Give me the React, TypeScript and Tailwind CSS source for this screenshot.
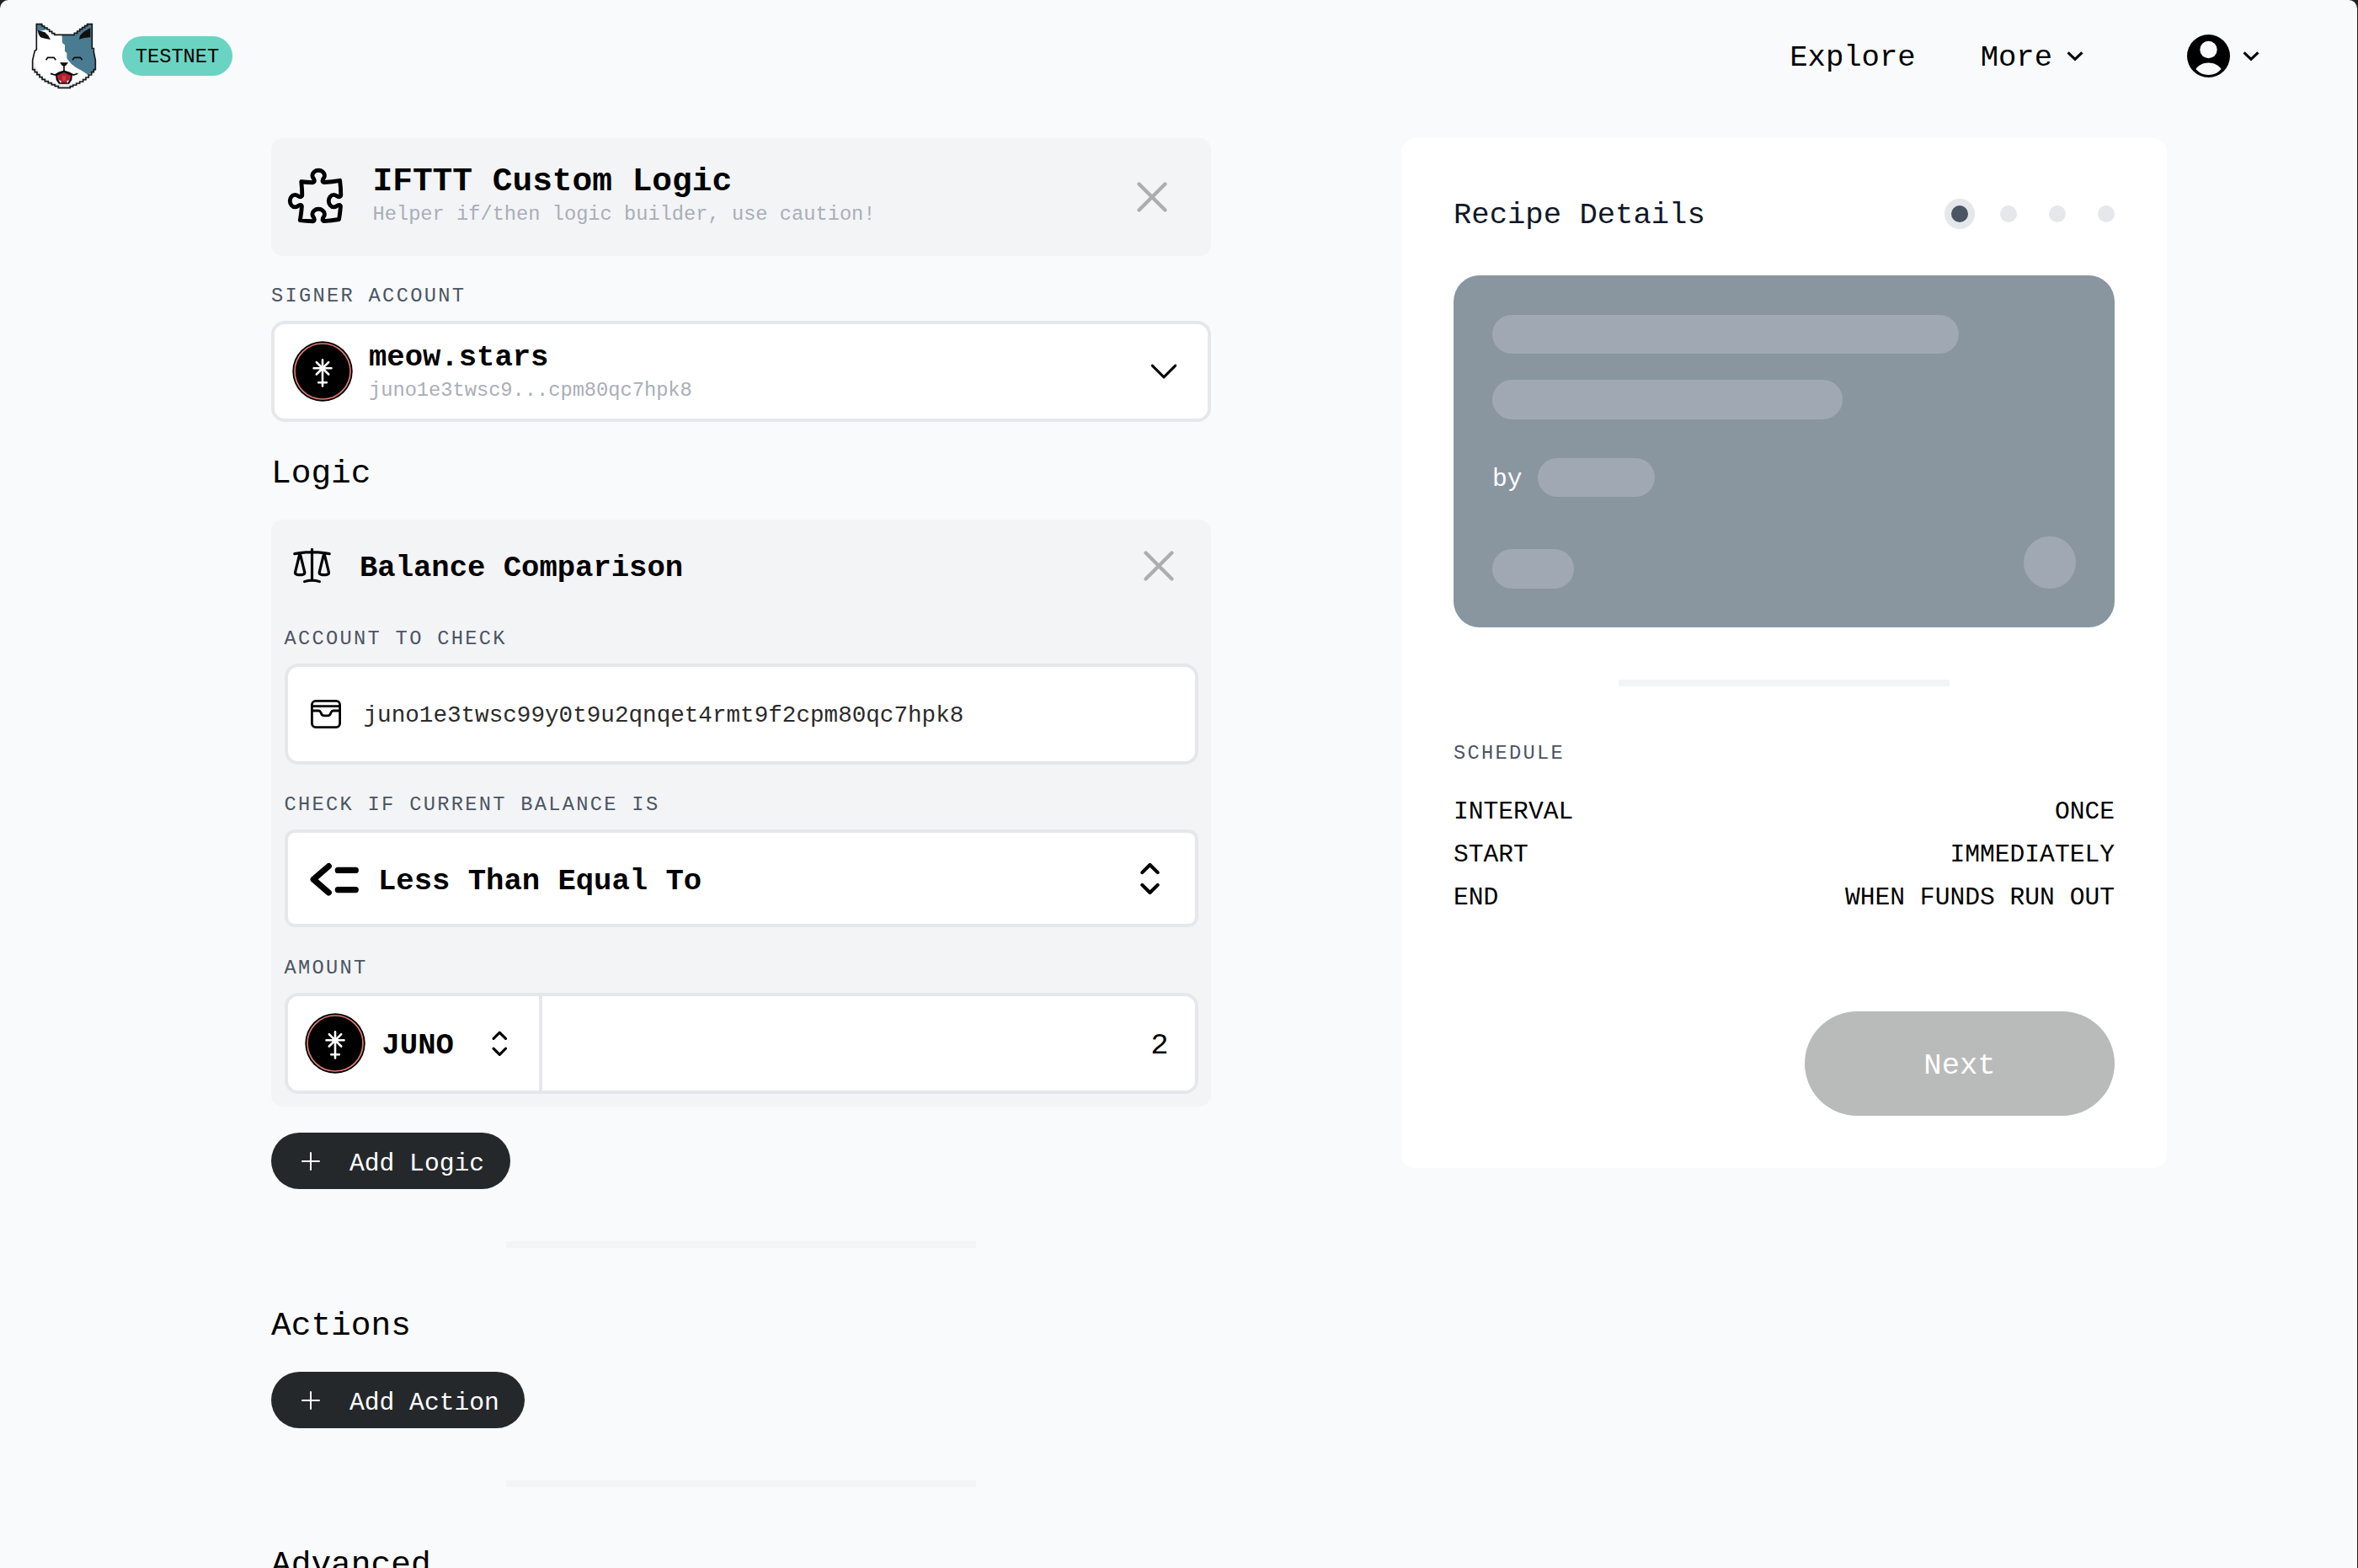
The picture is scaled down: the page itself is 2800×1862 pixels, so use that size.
import type { ReactNode } from "react";
import {
  HiOutlinePuzzlePiece,
  HiOutlineScale,
  HiOutlineXMark,
} from "react-icons/hi2";

function CatLogo() {
  return (
    <svg viewBox="111 78 234 237" className="h-[79px] w-[78px]" aria-hidden="true">
      <defs>
        <radialGradient id="fur" cx="0.5" cy="0.45" r="0.6">
          <stop offset="0.75" stopColor="#ffffff" />
          <stop offset="1" stopColor="#b9bcc0" />
        </radialGradient>
        <clipPath id="head">
          <path d="M130 83H149L167 98L195 122H265L285 102L310 83H328V170L335 182L340 212V245L325 262L300 282L270 298L250 310H208L185 298L150 280L135 265L116 245V212L124 178L130 174Z" />
        </clipPath>
      </defs>
      <g clipPath="url(#head)">
        <rect x="111" y="78" width="234" height="237" fill="url(#fur)" />
        <path d="M220 110H345V245L314 264L300 254L285 245L270 237L255 226L245 214L238 205V185L231 180V157L222 150Z" fill="#4a7c91" />
        <path d="M290 75H345V125H275Z" fill="#4a7c91" />
        <path d="M130 80H150L168 100L160 104L133 108Z" fill="#4a7c91" />
        <path d="M134 104L160 112L172 124L180 138L160 134L144 130L138 120Z" fill="#101010" />
        <path d="M322 96V130L300 132L281 137L286 122L298 110Z" fill="#101010" />
      </g>
      <path
        d="M130 83H149V90H158V96H168V102H176V109H185V116H194V121H265V115H275V108H284V101H293V95H302V89H311V83H328V170H334V182L340 212V245H334V254H326V264H316V273H306V281H296V288H284V294H272V300H260V305H250V310H208V304H196V299H184V293H172V287H160V280H150V272H141V263H132V254H124V245H116V212L124 178L130 174Z"
        fill="none"
        stroke="#15171a"
        strokeWidth="5"
      />
      <path d="M164 211L170 202H192L199 211M258 211L265 202H286L293 211" fill="none" stroke="#0b0b0b" strokeWidth="5" />
      <path d="M213 220H243L234 232H222Z" fill="#0b0b0b" />
      <path d="M228 230V248M180 259L196 264L210 256L228 250L246 256L262 264L277 259" fill="none" stroke="#0b0b0b" strokeWidth="5" />
      <path d="M198 262L228 250L258 262L256 282L246 296H210L200 282Z" fill="#0b0b0b" />
      <path d="M203 266L228 255L253 266L250 280L240 292H216L206 280Z" fill="#b3202f" />
      <path d="M222 268H234V284H222Z" fill="#cb3a4d" />
      <path d="M209 282L218 286L216 294ZM247 282L238 286L240 294Z" fill="#ffffff" />
    </svg>
  );
}

function JunoToken() {
  return (
    <svg viewBox="-36 -36 72 72" className="h-[72px] w-[72px] shrink-0" aria-hidden="true">
      <circle r="35.7" fill="#000" />
      <circle r="33" fill="none" stroke="#e07a70" strokeWidth="1.7" />
      <path
        d="M-10.5 -3.7H10.5M-7.2 -10.9L7.2 3.5M7.2 -10.9L-7.2 3.5M0 -13.8V17.4M-4.8 13.2H4.8"
        stroke="#fff"
        strokeWidth="2.6"
        strokeLinecap="round"
      />
      <circle cy="-3.7" r="3.4" fill="#fff" />
    </svg>
  );
}

function UserIcon() {
  return (
    <svg viewBox="0 0 50 50" className="h-[51px] w-[51px]" aria-hidden="true">
      <circle cx="25" cy="25" r="25" fill="#000" />
      <circle cx="25" cy="17.6" r="10" fill="#f9fafc" />
      <path d="M10.2 40.2C13.5 35.5 19 32.8 25 32.8C31 32.8 36.5 35.5 39.8 40.2C36 44.6 31 47 25 47C19 47 14 44.6 10.2 40.2Z" fill="#f9fafc" />
    </svg>
  );
}

function NavChevron({ className }: { className: string }) {
  return (
    <svg viewBox="0 0 20 12" className={className} fill="none" stroke="#000" strokeWidth="3.2" aria-hidden="true">
      <path d="M1.6 1.4L10 9.4L18.4 1.4" />
    </svg>
  );
}

function WalletIcon() {
  return (
    <svg viewBox="0 0 36 34" className="h-[34px] w-[36px] shrink-0" fill="none" stroke="#000" strokeWidth="2.8" strokeLinejoin="round" aria-hidden="true">
      <rect x="1.4" y="1.4" width="33.2" height="31.2" rx="4.5" />
      <path d="M1.4 7.6H34.6M1.4 13H9.5C11 13 11.4 13.8 12 15.2C12.8 17.6 14 18.9 15.8 18.9H20.2C22 18.9 23.2 17.6 24 15.2C24.6 13.8 25 13 26.5 13H34.6" />
    </svg>
  );
}

function LessThanEqualIcon() {
  return (
    <svg viewBox="0 0 58 40" className="mt-[2px] h-[40px] w-[58px] shrink-0" fill="none" stroke="#000" strokeWidth="7.2" strokeLinecap="round" strokeLinejoin="round" aria-hidden="true">
      <path d="M22.3 4.6L4.2 20.3L22.3 36M33.3 9.4H54.3M33.3 32.6H54.3" />
    </svg>
  );
}

function ChevronUpDown({ className, weight }: { className: string; weight: number }) {
  return (
    <svg viewBox="0 0 24 24" className={className} fill="none" stroke="#000" strokeWidth={weight} strokeLinecap="round" strokeLinejoin="round" aria-hidden="true">
      <path d="M8.25 15L12 18.75L15.75 15M8.25 9L12 5.25L15.75 9" />
    </svg>
  );
}

function FieldLabel({ children }: { children: ReactNode }) {
  return (
    <div className="mb-[14px] text-[23.7px] leading-[30px] tracking-[2.3px] text-[#4b5563] uppercase">
      {children}
    </div>
  );
}

function SectionTitle({ children }: { children: ReactNode }) {
  return <h2 className="text-[39.5px] leading-[56px]">{children}</h2>;
}

function AddButton({ children }: { children: ReactNode }) {
  return (
    <button className="flex h-[67px] items-center self-start rounded-full bg-[#25282b] pr-[30.5px] pl-[36px] text-[29.64px] text-white">
      <svg viewBox="0 0 22 22" className="mr-[35px] h-[22px] w-[22px]" stroke="#fff" strokeWidth="2" strokeLinecap="round" aria-hidden="true">
        <path d="M11 1V21M1 11H21" />
      </svg>
      <span className="pt-[6px] leading-[40px]">{children}</span>
    </button>
  );
}

function Divider() {
  return <div className="mt-[62px] h-[8px] w-1/2 self-center bg-[#f3f4f6]" />;
}

function ScheduleRow({ name, value }: { name: string; value: string }) {
  return (
    <div className="flex justify-between">
      <span>{name}</span>
      <span>{value}</span>
    </div>
  );
}

function Header() {
  return (
    <header className="flex h-[132px] items-center pr-[116px] pl-[37px]">
      <CatLogo />
      <span className="ml-[30px] flex h-[47px] w-[131px] items-center justify-center rounded-full bg-[#6bd3c1] text-[23.7px]">
        <span className="pt-[4px] leading-[30px]">TESTNET</span>
      </span>
      <nav className="ml-auto flex items-center text-[35.57px]">
        <span className="pt-[6px] leading-[44px]">Explore</span>
        <span className="ml-[77px] pt-[6px] leading-[44px]">More</span>
        <NavChevron className="mt-[2px] ml-[17px] h-[12px] w-[20px]" />
        <span className="ml-[123px]">
          <UserIcon />
        </span>
        <NavChevron className="mt-[2px] ml-[15px] h-[12px] w-[20px]" />
      </nav>
    </header>
  );
}

function RecipeBuilder() {
  return (
    <section className="flex w-[1116px] flex-col">
      <div className="flex h-[140px] items-start rounded-[14px] bg-[#f3f4f6] pt-[29px] pr-[39px] pl-[14.5px]">
        <HiOutlinePuzzlePiece className="mt-[2px] h-[77.5px] w-[77.5px]" />
        <div className="ml-[28.5px]">
          <h1 className="text-[39.5px] leading-[45px] font-bold">IFTTT Custom Logic</h1>
          <p className="pt-[2px] text-[23.7px] leading-[30px] text-[#a9aeb9]">
            Helper if/then logic builder, use caution!
          </p>
        </div>
        <HiOutlineXMark className="mt-[10px] ml-auto h-[62px] w-[62px] text-[#adadad] [stroke-width:1.65]" />
      </div>

      <div className="mt-[33px]">
        <FieldLabel>Signer account</FieldLabel>
      </div>
      <div className="flex h-[120px] items-center rounded-[16px] border-4 border-[#e5e7eb] bg-white pr-[30px] pl-[20.5px]">
        <JunoToken />
        <div className="ml-[19.5px] self-start pt-[19px]">
          <div className="text-[35.57px] leading-[42px] font-bold">meow.stars</div>
          <div className="text-[23.7px] leading-[35px] text-[#a9aeb9]">juno1e3twsc9...cpm80qc7hpk8</div>
        </div>
        <svg viewBox="0 0 24 24" className="ml-auto h-[44px] w-[44px]" fill="none" stroke="#000" strokeWidth="1.6" strokeLinecap="round" strokeLinejoin="round" aria-hidden="true">
          <path d="M19.5 8.25L12 15.75L4.5 8.25" />
        </svg>
      </div>

      <div className="mt-[34px] mb-[26px]">
        <SectionTitle>Logic</SectionTitle>
      </div>

      <div className="flex flex-col rounded-[14px] bg-[#f3f4f6] px-[15.5px] pb-[15px]">
        <div className="mb-[18px] flex h-[109px] items-center pr-[15.5px] pl-[7.5px]">
          <HiOutlineScale className="h-[51px] w-[51px]" />
          <h3 className="ml-[31px] pt-[6px] text-[35.57px] leading-[44px] font-bold">Balance Comparison</h3>
          <HiOutlineXMark className="ml-auto h-[62px] w-[62px] text-[#adadad] [stroke-width:1.65]" />
        </div>

        <FieldLabel>Account to check</FieldLabel>
        <div className="mb-[33px] flex h-[120px] items-center rounded-[16px] border-4 border-[#e5e7eb] bg-white pl-[27px]">
          <WalletIcon />
          <span className="ml-[27px] pt-[4px] text-[27.64px] leading-[40px] text-[#2b2b2b]">
            juno1e3twsc99y0t9u2qnqet4rmt9f2cpm80qc7hpk8
          </span>
        </div>

        <FieldLabel>Check if current balance is</FieldLabel>
        <div className="mb-[34px] flex h-[116px] items-center rounded-[12px] border-4 border-[#e5e7eb] bg-white pr-[24px] pl-[26.5px]">
          <LessThanEqualIcon />
          <span className="ml-[23px] pt-[7px] text-[35.57px] leading-[44px] font-bold">Less Than Equal To</span>
          <ChevronUpDown className="ml-auto h-[59px] w-[59px]" weight={1.7} />
        </div>

        <FieldLabel>Amount</FieldLabel>
        <div className="flex h-[120px] rounded-[16px] border-4 border-[#e5e7eb] bg-white">
          <div className="flex w-[302px] items-center border-r-4 border-[#e5e7eb] pl-[20.5px]">
            <JunoToken />
            <span className="ml-[19.5px] pt-[6px] text-[35.57px] leading-[44px] font-bold">JUNO</span>
            <ChevronUpDown className="ml-[31px] h-[46.5px] w-[46.5px]" weight={1.6} />
          </div>
          <div className="flex flex-1 items-center justify-end pr-[31px] text-[35.57px]">
            <span className="pt-[6px] leading-[44px]">2</span>
          </div>
        </div>
      </div>

      <div className="mt-[31px] flex flex-col">
        <AddButton>Add Logic</AddButton>
        <Divider />
      </div>
      <div className="mt-[65px] flex flex-col gap-[26px]">
        <SectionTitle>Actions</SectionTitle>
        <AddButton>Add Action</AddButton>
      </div>
      <Divider />
      <div className="mt-[65px]">
        <SectionTitle>Advanced</SectionTitle>
      </div>
    </section>
  );
}

function RecipeDetails() {
  return (
    <aside className="flex h-[1223px] w-[909px] flex-col rounded-[16px] bg-white px-[62px] pt-[62px]">
      <div className="mb-[46px] flex h-[55px] items-center justify-between">
        <h2 className="pt-[5px] text-[35.57px] leading-[44px] text-[#111827]">Recipe Details</h2>
        <div className="flex items-center gap-[38px]">
          <span className="-mr-[8px] flex h-[36px] w-[36px] items-center justify-center rounded-full bg-[#e5e7eb]">
            <span className="h-[20px] w-[20px] rounded-full bg-[#4b5563]" />
          </span>
          <span className="h-[20px] w-[20px] rounded-full bg-[#e5e7eb]" />
          <span className="h-[20px] w-[20px] rounded-full bg-[#e5e7eb]" />
          <span className="h-[20px] w-[20px] rounded-full bg-[#e5e7eb]" />
        </div>
      </div>

      <div className="flex h-[418px] flex-col rounded-[31px] bg-[#8996a0] p-[46.5px] pl-[46px]">
        <div className="h-[46.5px] w-[554px] rounded-full bg-[#a0a9b3]" />
        <div className="mt-[31px] h-[46.5px] w-[415.5px] rounded-full bg-[#a0a9b3]" />
        <div className="mt-[46px] flex h-[46.5px] items-center text-[29.64px] text-white">
          <span className="pt-[4px] leading-[40px]">by</span>
          <span className="ml-[18px] h-full w-[139px] rounded-full bg-[#a0a9b3]" />
        </div>
        <div className="mt-auto flex items-end justify-between">
          <div className="h-[46.5px] w-[97px] rounded-full bg-[#a0a9b3]" />
          <div className="h-[62px] w-[62px] rounded-full bg-[#a0a9b3]" />
        </div>
      </div>

      <Divider />

      <div className="mt-[64px] mb-[29px] text-[23.7px] leading-[31px] tracking-[2.3px] text-[#4b5563]">SCHEDULE</div>
      <div className="text-[29.64px] leading-[51.2px]">
        <ScheduleRow name="INTERVAL" value="ONCE" />
        <ScheduleRow name="START" value="IMMEDIATELY" />
        <ScheduleRow name="END" value="WHEN FUNDS RUN OUT" />
      </div>

      <button className="mt-[108px] flex h-[124px] w-[368px] items-center justify-center self-end rounded-full bg-[#b9bbba] text-[35.57px] text-white">
        <span className="pt-[6px] leading-[44px]">Next</span>
      </button>
    </aside>
  );
}

export default function App() {
  return (
    <div className="h-[1862px] w-[2800px] overflow-hidden bg-[#1f1f21] pr-px font-['Liberation_Mono',monospace] text-black">
      <div className="h-full overflow-hidden rounded-t-[10px] bg-[#f9fafc]">
        <Header />
        <main className="flex items-start gap-[226px] pt-[32px] pl-[322px]">
          <RecipeBuilder />
          <RecipeDetails />
        </main>
      </div>
    </div>
  );
}
